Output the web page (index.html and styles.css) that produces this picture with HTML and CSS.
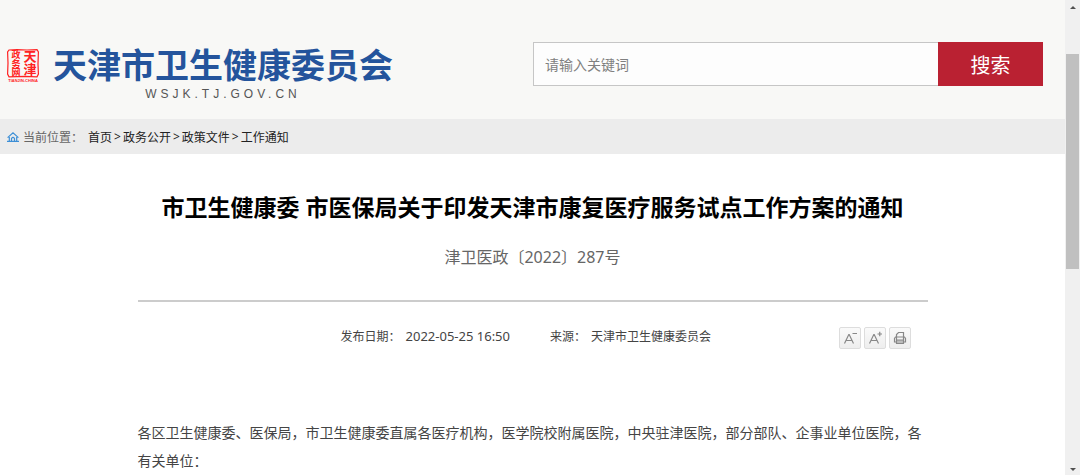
FILE: index.html
```html
<!DOCTYPE html>
<html lang="zh-CN">
<head>
    <meta charset="UTF-8">
    <meta name="viewport" content="width=device-width, initial-scale=1.0">
    <title>天津市卫生健康委员会</title>
    <link rel="stylesheet" href="styles.css">
</head>
<body>
    <div class="page">
        <header class="header">
            <a class="logo" href="#">
                <svg class="seal" viewBox="0 0 32 34" width="32" height="34" aria-hidden="true">
                    <path class="seal-frame" d="M2 1L10 .6L20 1L30 .6L31.400 3L31 15L31.400 25L30 27.800L18 27.400L2 27.800L.6 25L1 14L.6 3Z"/>
                    <text class="seal-chars" x="9" y="1">政务网</text>
                    <text class="seal-chars large" x="23" y="1">天津</text>
                    <text class="seal-name" x="16" y="32.500">TIANJIN-CHINA</text>
                </svg>
                <span class="logo-text">
                    <span class="logo-name">天津市卫生健康委员会</span>
                    <span class="logo-domain">WSJK.TJ.GOV.CN</span>
                </span>
            </a>
            <form class="search">
                <input type="text" placeholder="请输入关键词" aria-label="请输入关键词">
                <button type="button">搜索</button>
            </form>
        </header>

        <nav class="crumbs">
            <svg class="home" viewBox="0 0 12 10" width="12" height="10" aria-hidden="true">
                <path d="M.6 5.600L6 .9L11.400 5.600M2.300 5V9M9.700 5V9M0 9.300H12M4.500 9V6.500Q6 4.200 7.500 6.500V9"/>
            </svg>
            <span class="crumbs-label">当前位置：</span>
            <a href="#">首页</a><span class="sep">&gt;</span><a href="#">政务公开</a><span class="sep">&gt;</span><a href="#">政策文件</a><span class="sep">&gt;</span><a href="#">工作通知</a>
        </nav>

        <main class="article">
            <h1>市卫生健康委 市医保局关于印发天津市康复医疗服务试点工作方案的通知</h1>
            <p class="number">津卫医政〔2022〕287号</p>
            <div class="meta">
                <div class="meta-text">
                    <span>发布日期：</span>
                    <time>2022-05-25 16:50</time>
                    <span class="source">来源：</span>
                    <span>天津市卫生健康委员会</span>
                </div>
                <div class="tools">
                    <button type="button" aria-label="缩小字体">
                        <svg viewBox="0 0 20 20" width="20" height="20"><path d="M4.500 15.500L8.800 6.500H9.200L13.500 15.500M6 12.500H12M12.500 5.500H17"/></svg>
                    </button>
                    <button type="button" aria-label="放大字体">
                        <svg viewBox="0 0 20 20" width="20" height="20"><path d="M4.500 15.500L8.800 6.500H9.200L13.500 15.500M6 12.500H12M12.500 6H17M14.750 3.800V8.200"/></svg>
                    </button>
                    <button type="button" aria-label="打印">
                        <svg viewBox="0 0 20 20" width="20" height="20"><path d="M6.500 9V6.500L8.500 4.500H13.500V9M5.500 9H14.500L15.500 10.500V14H4.500V10.500ZM6.500 9V15.500H13.500V9M6.500 12.200H13.500"/></svg>
                    </button>
                </div>
            </div>
            <div class="content">
                <p>各区卫生健康委、医保局，市卫生健康委直属各医疗机构，医学院校附属医院，中央驻津医院，部分部队、企事业单位医院，各有关单位：</p>
            </div>
        </main>
    </div>

    <div class="scrollbar" aria-hidden="true">
        <span class="arrow up"></span>
        <div class="track"><div class="thumb"></div></div>
        <span class="arrow down"></span>
    </div>
</body>
</html>
```

FILE: styles.css
```css
* {
    box-sizing: border-box;
}
body {
    display: flex;
    height: 100vh;
    margin: 0;
    overflow: hidden;
    background: #fff;
    color: #444;
    font-family: "Noto Sans", "Noto Sans CJK SC", sans-serif;
    font-size: 12px;
}
a {
    color: inherit;
    text-decoration: none;
}
.page {
    flex: 1;
    min-width: 0;
}

/* header */
.header {
    display: flex;
    justify-content: space-between;
    align-items: flex-start;
    height: 119px;
    padding: 42px 22px 0 7px;
    background: #f8f8f6;
}
.logo {
    display: flex;
    gap: 14px;
}
.seal {
    margin-top: 7px;
    overflow: visible;
}
.seal-frame {
    fill: none;
    stroke: #f22;
    stroke-width: 1.2;
}
.seal-chars {
    fill: #f22;
    font-family: "Noto Sans CJK SC", sans-serif;
    font-size: 9px;
    font-weight: bold;
    writing-mode: vertical-rl;
}
.seal-chars.large {
    font-size: 13px;
}
.seal-name {
    fill: #f22;
    font-family: "Liberation Sans", sans-serif;
    font-size: 4px;
    font-weight: bold;
    text-anchor: middle;
}
.logo-text {
    display: flex;
    flex-direction: column;
    align-items: center;
    padding-top: 1px;
}
.logo-name {
    color: #24549c;
    font-family: "Noto Sans CJK SC", sans-serif;
    font-size: 34px;
    font-weight: bold;
    line-height: 42px;
}
.logo-domain {
    color: #555;
    font-family: "Liberation Sans", sans-serif;
    font-size: 12px;
    line-height: 18px;
    letter-spacing: 4px;
}
.search {
    display: flex;
    width: 510px;
    height: 44px;
}
.search input {
    flex: 1;
    min-width: 0;
    padding: 0 11px;
    border: 1px solid #c6c6c6;
    border-right: 0;
    background: #fdfdfd;
    font-family: inherit;
    font-size: 14px;
}
.search input::placeholder {
    color: #808080;
}
.search button {
    width: 105px;
    border: 0;
    background: #ba2132;
    color: #fff;
    font-family: inherit;
    font-size: 20px;
}

/* breadcrumb */
.crumbs {
    display: flex;
    align-items: center;
    height: 35px;
    padding-left: 7px;
    background: #ececec;
    color: #222;
}
.home {
    fill: none;
    stroke: #3d8fd6;
    stroke-width: 1.2;
}
.crumbs-label {
    margin: 0 5px 0 4px;
    color: #666;
}
.sep {
    padding: 0 2px;
}

/* article */
.article {
    width: 790px;
    max-width: 100%;
    margin: 0 auto;
    padding-top: 35px;
}
.article h1 {
    margin: 0;
    color: #000;
    font-size: 23px;
    line-height: 36px;
    text-align: center;
}
.number {
    margin: 20px 0 31px;
    color: #666;
    font-size: 16px;
    line-height: 24px;
    text-align: center;
}
.meta {
    display: flex;
    justify-content: space-between;
    padding: 25px 17px 0 203px;
    border-top: 2px solid #ccc;
}
.meta-text {
    display: flex;
    gap: 5px;
    height: 18px;
    align-items: center;
}
.meta-text .source {
    margin-left: 35px;
}
.meta-text time {
    font-size: 13px;
}
.tools {
    display: flex;
    gap: 3px;
}
.tools button {
    display: flex;
    width: 22px;
    height: 22px;
    padding: 0;
    border: 1px solid #ddd;
    border-radius: 2px;
    background: linear-gradient(#fafafa, #eee);
}
.tools svg {
    fill: none;
    stroke: #888;
    stroke-width: 1.2;
}
.content {
    margin-top: 70px;
    font-size: 14px;
    line-height: 28px;
}
.content p {
    margin: 0;
}

/* scrollbar */
.scrollbar {
    display: flex;
    flex-direction: column;
    align-items: center;
    width: 15px;
    padding: 6px 1px 4px;
    background: #f0f0f0;
}
.track {
    flex: 1;
    width: 100%;
    padding-top: 45px;
}
.thumb {
    height: 52%;
    background: #c0c0c0;
}
.arrow {
    border: 3px solid transparent;
}
.arrow.up {
    border-top: 0;
    border-bottom-color: #505050;
}
.arrow.down {
    border-bottom: 0;
    border-top-color: #505050;
}
```
